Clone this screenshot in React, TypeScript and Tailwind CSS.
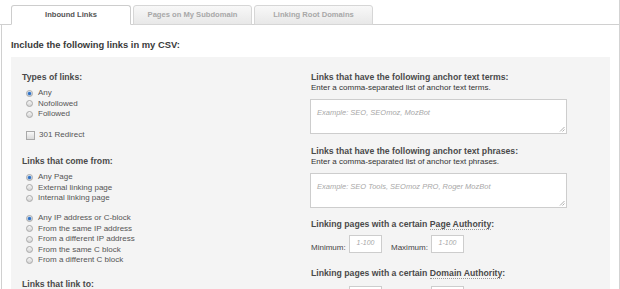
import React from "react";

const font = { fontFamily: '"Liberation Sans", Arial, sans-serif' };

const Radio = ({ checked, label }: { checked?: boolean; label: string }) => (
  <div className="flex items-center h-[10.5px]">
    <span className="relative w-[7px] h-[7px] rounded-full border border-[#a9a9a9] bg-gradient-to-b from-[#f6f6f6] to-[#d4d4d4] mr-[5px] shrink-0">
      {checked && (
        <span className="absolute left-[1px] top-[1px] w-[3px] h-[3px] rounded-full bg-[#2c6fc4] shadow-[0_0_0_0.5px_#7aa7dd]" />
      )}
    </span>
    <span className="text-[8px] leading-[10px] text-[#555]">{label}</span>
  </div>
);

const Tab = ({ label, active }: { label: string; active?: boolean }) => (
  <div
    className={`relative w-[119px] h-[20px] flex items-center justify-center border rounded-t-[3px] text-[7.6px] font-bold ${
      active
        ? "bg-white text-[#555] border-[#cdcdcd] border-b-white w-[120px]"
        : "bg-gradient-to-b from-[#f8f8f8] to-[#e8e8e8] text-[#a8a8a8] border-[#d6d6d6]"
    }`}
  >
    {label}
  </div>
);

const Heading = ({ children }: { children: React.ReactNode }) => (
  <div className="text-[8.7px] font-bold text-[#4a4a4a] leading-[11px]">{children}</div>
);

const Sub = ({ children }: { children: React.ReactNode }) => (
  <div className="text-[8px] text-[#333] leading-[10px]">{children}</div>
);

const Dotted = ({ children }: { children: React.ReactNode }) => (
  <span className="border-b border-dotted border-[#9a9a9a]">{children}</span>
);

const Area = ({ placeholder }: { placeholder: string }) => (
  <div className="relative -ml-px w-[257px] h-[35px] bg-white border border-[#cdcdcd] pl-[6px] pt-[8px]">
    <span className="text-[7.5px] italic text-[#a8a8a8] leading-[9px] block">{placeholder}</span>
    <svg className="absolute right-[1px] bottom-[1px]" width="6" height="6" viewBox="0 0 6 6">
      <path d="M5.5 1 L1 5.5 M5.5 3.5 L3.5 5.5" stroke="#9a9a9a" strokeWidth="0.8" />
    </svg>
  </div>
);

const NumBox = () => (
  <div className="w-[33px] h-[18px] bg-white border border-[#cdcdcd] flex justify-center pt-[2px]">
    <span className="text-[7px] leading-[9px] italic text-[#a8a8a8]">1-100</span>
  </div>
);

const MinMax = ({ labels = true }: { labels?: boolean }) => (
  <div className="flex items-end text-[8px] leading-[10px] text-[#444]">
    <span className={`w-[38px] ${labels ? "" : "invisible"}`}>Minimum:</span>
    <NumBox />
    <span className={`ml-[9px] w-[40px] ${labels ? "" : "invisible"}`}>Maximum:</span>
    <NumBox />
  </div>
);

export default function App() {
  return (
    <div className="w-[620px] h-[289px] overflow-hidden bg-white border-r border-[#d3d3d3]" style={font}>
      <div className="flex gap-[2px] pl-[11px] pt-[5px] border-b border-[#d0d0d0] h-[25px]">
        <Tab label="Inbound Links" active />
        <Tab label="Pages on My Subdomain" />
        <Tab label="Linking Root Domains" />
      </div>
      <div className="ml-px border-l border-[#d0d0d0] h-[264px] pl-[9px] pr-[9px]">
        <div className="pt-[14px] text-[9.4px] font-bold text-[#3a3a3a] leading-[12px] h-[32px]">
          Include the following links in my CSV:
        </div>
        <div className="bg-[#f4f4f4] h-[240px] flex pt-[15px] pl-[11px]">
          <div className="w-[289px] shrink-0">
            <Heading>Types of links:</Heading>
            <div className="mt-[5px] ml-[4px]">
              <Radio checked label="Any" />
              <Radio label="Nofollowed" />
              <Radio label="Followed" />
            </div>
            <div className="mt-[10.5px] ml-[4px] h-[10px] flex items-center">
              <span className="w-[9px] h-[9px] border border-[#a9a9a9] bg-gradient-to-b from-[#f8f8f8] to-[#dadada] mr-[4px] shrink-0" />
              <span className="text-[8px] leading-[10px] text-[#555]">301 Redirect</span>
            </div>
            <div className="mt-[15.5px]">
              <Heading>Links that come from:</Heading>
            </div>
            <div className="mt-[5.25px] ml-[4px]">
              <Radio checked label="Any Page" />
              <Radio label="External linking page" />
              <Radio label="Internal linking page" />
            </div>
            <div className="mt-[9.5px] ml-[4px]">
              <Radio checked label="Any IP address or C-block" />
              <Radio label="From the same IP address" />
              <Radio label="From a different IP address" />
              <Radio label="From the same C block" />
              <Radio label="From a different C block" />
            </div>
            <div className="mt-[13.25px]">
              <Heading>Links that link to:</Heading>
            </div>
          </div>
          <div className="w-[290px]">
            <Heading>Links that have the following anchor text terms:</Heading>
            <Sub>Enter a comma-separated list of anchor text terms.</Sub>
            <div className="mt-[6px]">
              <Area placeholder="Example: SEO, SEOmoz, MozBot" />
            </div>
            <div className="mt-[11.5px]">
              <Heading>Links that have the following anchor text phrases:</Heading>
            </div>
            <Sub>Enter a comma-separated list of anchor text phrases.</Sub>
            <div className="mt-[6.5px]">
              <Area placeholder="Example: SEO Tools, SEOmoz PRO, Roger MozBot" />
            </div>
            <div className="mt-[10.5px]">
              <Heading>
                Linking pages with a certain <Dotted>Page Authority</Dotted>:
              </Heading>
            </div>
            <div className="mt-[5.5px]">
              <MinMax />
            </div>
            <div className="mt-[14.5px]">
              <Heading>
                Linking pages with a certain <Dotted>Domain Authority</Dotted>:
              </Heading>
            </div>
            <div className="mt-[7.5px]">
              <MinMax labels={false} />
            </div>
          </div>
        </div>
      </div>
    </div>
  );
}
